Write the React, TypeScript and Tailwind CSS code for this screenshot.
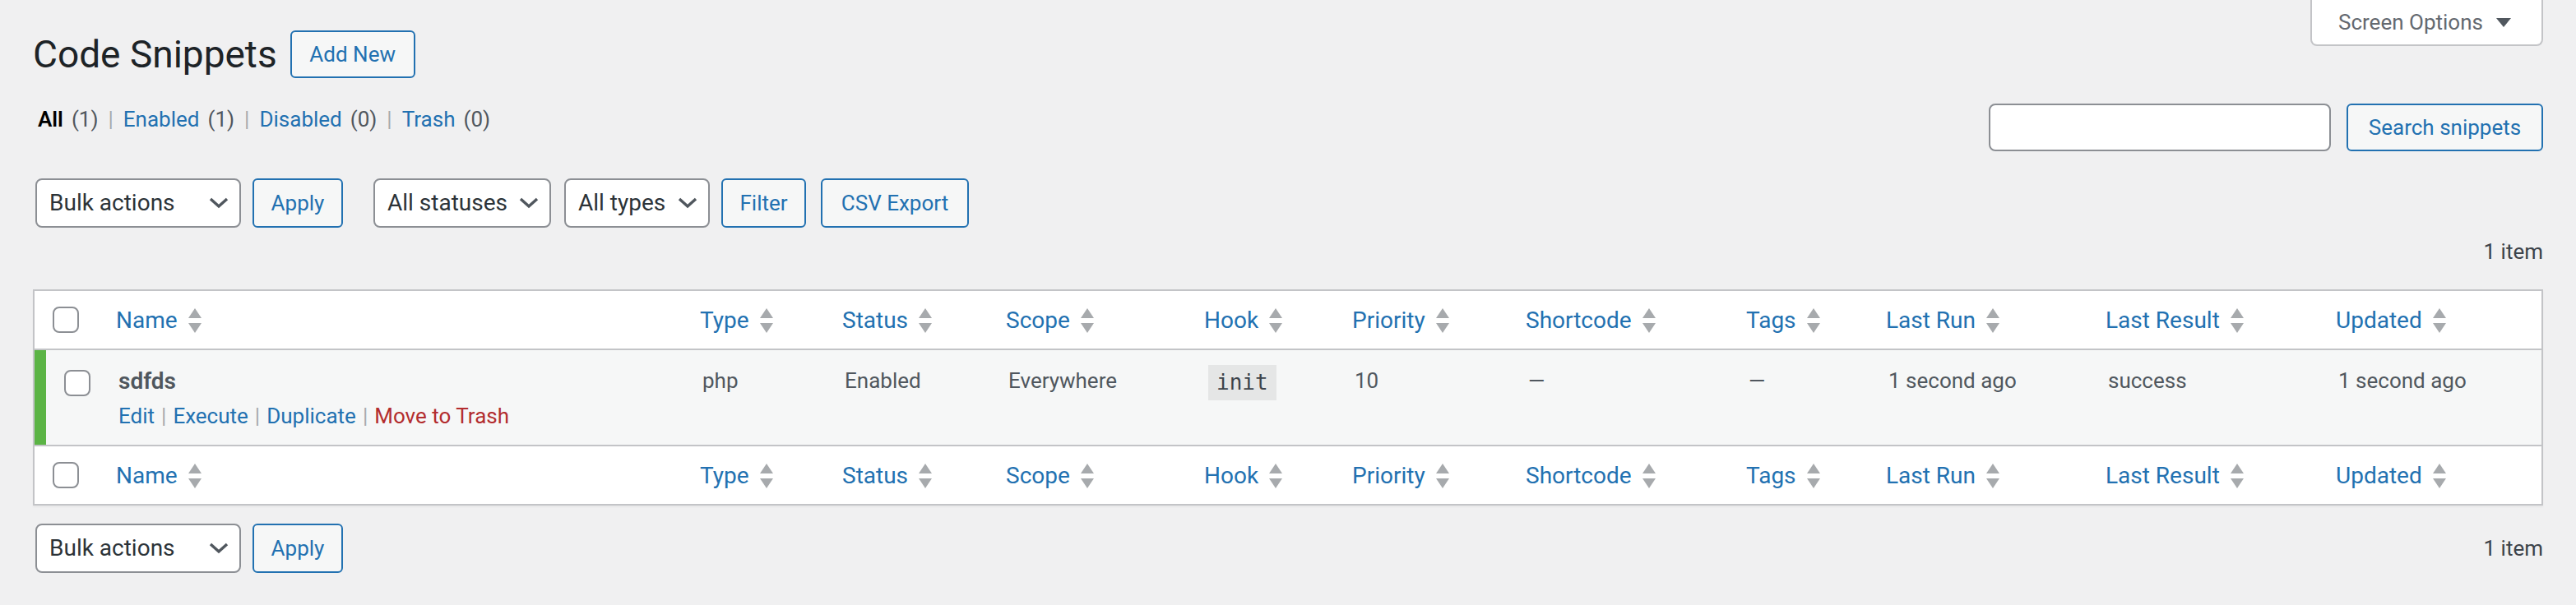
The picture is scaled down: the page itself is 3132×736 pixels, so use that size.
import type { ReactNode } from "react";

type Column = { key: string; label: string; width: string };

const columns: Column[] = [
  { key: "name", label: "Name", width: "w-[710px]" },
  { key: "type", label: "Type", width: "w-[173px]" },
  { key: "status", label: "Status", width: "w-[199px]" },
  { key: "scope", label: "Scope", width: "w-[241px]" },
  { key: "hook", label: "Hook", width: "w-[180px]" },
  { key: "priority", label: "Priority", width: "w-[211px]" },
  { key: "shortcode", label: "Shortcode", width: "w-[268px]" },
  { key: "tags", label: "Tags", width: "w-[170px]" },
  { key: "last_run", label: "Last Run", width: "w-[267px]" },
  { key: "last_result", label: "Last Result", width: "w-[280px]" },
  { key: "updated", label: "Updated", width: "w-[270px]" },
];

const snippet = {
  name: "sdfds",
  type: "php",
  status: "Enabled",
  scope: "Everywhere",
  hook: "init",
  priority: "10",
  shortcode: "—",
  tags: "—",
  lastRun: "1 second ago",
  lastResult: "success",
  updated: "1 second ago",
};

const SortIndicator = () => (
  <svg width="16" height="30" viewBox="0 0 16 30" className="ml-[13px] shrink-0">
    <polygon points="8,0 16,12 0,12" fill="#a7aaad" />
    <polygon points="0,18 16,18 8,30" fill="#a7aaad" />
  </svg>
);

const Chevron = () => (
  <svg width="24" height="14" viewBox="0 0 24 14" className="shrink-0">
    <polyline points="2,2 12,11 22,2" fill="none" stroke="#50575e" strokeWidth="3.5" />
  </svg>
);

const Checkbox = () => (
  <span className="block h-[32px] w-[32px] rounded-[8px] border-2 border-[#8c8f94] bg-white" />
);

const Select = ({ label, width }: { label: string; width: string }) => (
  <div
    className={`flex h-[60px] items-center justify-between rounded-[8px] border-2 border-[#8c8f94] bg-white pl-[15px] pr-[13px] text-[28px] text-[#2c3338] ${width}`}
  >
    <span>{label}</span>
    <Chevron />
  </div>
);

const Button = ({ children, width, height = "h-[60px]" }: { children: ReactNode; width: string; height?: string }) => (
  <button
    className={`flex items-center justify-center rounded-[6px] border-2 border-[#2271b1] bg-[#f6f7f7] text-[26px] text-[#2271b1] ${width} ${height}`}
  >
    {children}
  </button>
);

const HeaderRow = ({ edge }: { edge: "top" | "bottom" }) => {
  const border = edge === "top" ? "border-b-2" : "border-t-2";
  return (
    <tr>
      <th className={`${border} border-[#c3c4c7] p-0 text-left font-normal`}>
        <div className="flex h-[70px] items-center pl-[22px]">
          <Checkbox />
        </div>
      </th>
      {columns.map((col) => (
        <th key={col.key} className={`${border} border-[#c3c4c7] p-0 text-left font-normal`}>
          <div className="flex h-[70px] items-center pl-[20px] pt-[2px]">
            <a className="text-[28px] leading-none text-[#2271b1]">{col.label}</a>
            <SortIndicator />
          </div>
        </th>
      ))}
    </tr>
  );
};

const Cell = ({ children }: { children: ReactNode }) => (
  <td className="pl-[23px] pt-[18px] pb-[15px] align-top text-[26px] leading-[39px] text-[#50575e]">{children}</td>
);

const Sep = () => <span className="mx-[8px] text-[#a7aaad]">|</span>;

const SnippetRow = () => (
  <tr className="bg-[#f6f7f7]">
    <td className="border-l-[14px] border-l-[#5bb445] pl-[22px] pt-[24px] align-top">
      <Checkbox />
    </td>
    <td className="pl-[23px] pt-[18px] pb-[15px] align-top text-[26px] leading-[39px] text-[#50575e]">
      <strong className="block text-[28px] font-semibold text-[#50575e]">{snippet.name}</strong>
      <div className="pt-[4px] text-[26px]">
        <a className="text-[#2271b1]">Edit</a>
        <Sep />
        <a className="text-[#2271b1]">Execute</a>
        <Sep />
        <a className="text-[#2271b1]">Duplicate</a>
        <Sep />
        <a className="text-[#b32d2e]">Move to Trash</a>
      </div>
    </td>
    <Cell>{snippet.type}</Cell>
    <Cell>{snippet.status}</Cell>
    <Cell>{snippet.scope}</Cell>
    <td className="pl-[25px] pt-[18px] pb-[15px] align-top text-[26px] leading-[39px] text-[#50575e]">
      <code className="inline-block bg-[#e5e6e6] px-[10px] py-[6px] font-['DejaVu_Sans_Mono',monospace] text-[26px] leading-[31px] text-[#3c434a]">
        {snippet.hook}
      </code>
    </td>
    <Cell>{snippet.priority}</Cell>
    <Cell>{snippet.shortcode}</Cell>
    <Cell>{snippet.tags}</Cell>
    <Cell>{snippet.lastRun}</Cell>
    <Cell>{snippet.lastResult}</Cell>
    <Cell>{snippet.updated}</Cell>
  </tr>
);

const filters = [
  { label: "All", count: 1, current: true },
  { label: "Enabled", count: 1 },
  { label: "Disabled", count: 0 },
  { label: "Trash", count: 0 },
];

export default function App() {
  return (
    <div className="min-h-screen bg-[#f0f0f1] px-[40px] font-['Roboto',sans-serif] text-[#3c434a]">
      {/* title + screen options tab */}
      <div className="flex items-start justify-between">
        <div className="mt-[37px] flex items-center">
          <h1 className="text-[46px] leading-[58px] font-normal text-[#1d2327]">Code Snippets</h1>
          <Button width="w-[152px] ml-[16px]" height="h-[58px]">
            Add New
          </Button>
        </div>
        <button className="flex h-[56px] w-[283px] items-center rounded-b-[8px] border-2 border-t-0 border-[#c3c4c7] bg-white pl-[32px] text-[26px] text-[#646970]">
          Screen Options
          <svg width="18" height="11" viewBox="0 0 18 11" className="ml-[16px]">
            <polygon points="0,0 18,0 9,11" fill="#50575e" />
          </svg>
        </button>
      </div>

      {/* status links + search */}
      <div className="mt-[31px] flex items-start justify-between">
        <ul className="ml-[1px] flex text-[26px] leading-[39px] text-[#646970]">
          {filters.map((f, i) => (
            <li key={f.label} className="flex whitespace-pre">
              <a className="px-[5px]">
                <span className={f.current ? "font-semibold text-black" : "text-[#2271b1]"}>{f.label}</span>
                <span className="ml-[10px] text-[#50575e]">({f.count})</span>
              </a>
              {i < filters.length - 1 && <span className="mx-[7px] text-[#a7aaad]">|</span>}
            </li>
          ))}
        </ul>
        <div className="flex items-center">
          <div className="h-[58px] w-[416px] rounded-[8px] border-2 border-[#8c8f94] bg-white" />
          <Button width="w-[239px] ml-[19px]" height="h-[58px]">
            Search snippets
          </Button>
        </div>
      </div>

      {/* top table nav */}
      <div className="mt-[33px] flex items-center pl-[3px]">
        <Select label="Bulk actions" width="w-[250px]" />
        <Button width="w-[110px] ml-[14px]">Apply</Button>
        <Select label="All statuses" width="w-[216px] ml-[37px]" />
        <Select label="All types" width="w-[177px] ml-[16px]" />
        <Button width="w-[103px] ml-[14px]">Filter</Button>
        <Button width="w-[180px] ml-[18px]">CSV Export</Button>
      </div>
      <div className="mt-[10px] text-right text-[26px] leading-[39px] text-[#3c434a]">1 item</div>

      <table className="mt-[26px] w-full table-fixed border-separate border-spacing-0 border-2 border-[#c3c4c7] bg-white shadow-[0_2px_2px_rgba(0,0,0,0.04)]">
        <colgroup>
          <col className="w-[79px]" />
          {columns.map((col) => (
            <col key={col.key} className={col.width} />
          ))}
        </colgroup>
        <thead>
          <HeaderRow edge="top" />
        </thead>
        <tbody>
          <SnippetRow />
        </tbody>
        <tfoot>
          <HeaderRow edge="bottom" />
        </tfoot>
      </table>

      {/* bottom table nav */}
      <div className="mt-[22px] flex items-center justify-between pl-[3px]">
        <div className="flex items-center">
          <Select label="Bulk actions" width="w-[250px]" />
          <Button width="w-[110px] ml-[14px]">Apply</Button>
        </div>
        <div className="text-[26px] text-[#3c434a]">1 item</div>
      </div>
    </div>
  );
}
